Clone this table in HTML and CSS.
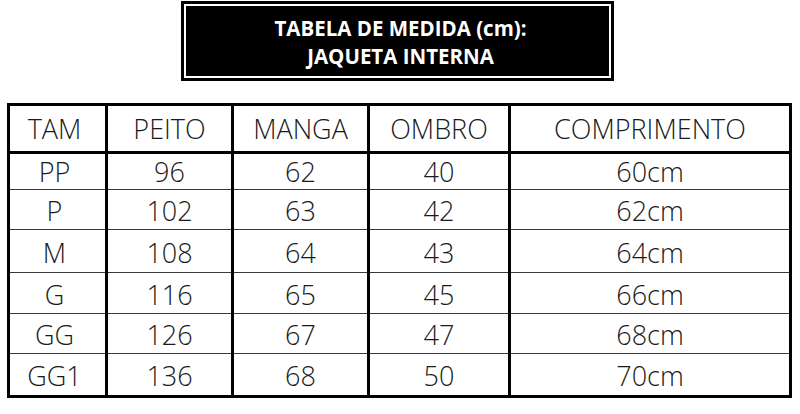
FILE: index.html
```html
<!DOCTYPE html>
<html lang="pt">
<head>
<meta charset="utf-8">
<title>Tabela de medida</title>
<link rel="stylesheet" href="styles.css">
</head>
<body>
<div class="page">
  <div class="title-box">
    <div class="title-inner">
      <div>TABELA DE MEDIDA (cm):</div>
      <div>JAQUETA INTERNA</div>
    </div>
  </div>
  <div class="grid">
    <div class="c h c1">TAM</div><div class="c h">PEITO</div><div class="c h">MANGA</div><div class="c h">OMBRO</div><div class="c h">COMPRIMENTO</div>
    <div class="c first c1">PP</div><div class="c first">96</div><div class="c first">62</div><div class="c first">40</div><div class="c first">60cm</div>
    <div class="c c1">P</div><div class="c">102</div><div class="c">63</div><div class="c">42</div><div class="c">62cm</div>
    <div class="c c1">M</div><div class="c">108</div><div class="c">64</div><div class="c">43</div><div class="c">64cm</div>
    <div class="c c1">G</div><div class="c">116</div><div class="c">65</div><div class="c">45</div><div class="c">66cm</div>
    <div class="c c1">GG</div><div class="c">126</div><div class="c">67</div><div class="c">47</div><div class="c">68cm</div>
    <div class="c c1">GG1</div><div class="c">136</div><div class="c">68</div><div class="c">50</div><div class="c">70cm</div>
  </div>
</div>
</body>
</html>
```
FILE: styles.css
```css
html, body {
  margin: 0;
  padding: 0;
  background: #fff;
}
.page {
  width: 800px;
  height: 414px;
  padding: 1px 0 0 7px;
  box-sizing: border-box;
  display: flex;
  flex-direction: column;
  align-items: flex-start;
  gap: 22px;
}
.title-box {
  margin-left: 174px;
  width: 433px;
  box-sizing: border-box;
  border: 3px solid #000;
  background: #000;
}
.title-inner {
  border: 2px solid #fff;
  background: #000;
  color: #fff;
  font-family: "Open Sans", sans-serif;
  font-weight: 700;
  font-size: 20.5px;
  line-height: 28px;
  text-align: center;
  padding: 8px 0 6px 6px;
}
.grid {
  display: grid;
  grid-template-columns: 95px 123px 133px 138px 278px;
  grid-template-rows: 45px 38px 40px 43px 41px 40px 42px;
  column-gap: 3px;
  background: #000;
  border: 3px solid #000;
  font-family: "Open Sans", sans-serif;
  font-weight: 300;
  font-size: 27px;
  color: #1a1a1a;
}
.c {
  background: #fff;
  display: flex;
  align-items: center;
  justify-content: center;
  border-top: 1px solid #3a3a3a;
  box-sizing: border-box;
  padding-top: 2px;
}
.c.h {
  border-top: none;
  padding-top: 0;
  height: 48px;
  border-bottom: 3px solid #000;
  padding-bottom: 1px;
}
.c.first {
  border-top: none;
  margin-top: 3px;
  padding-top: 0;
}
.c1 {
  padding-right: 6px;
}
```
